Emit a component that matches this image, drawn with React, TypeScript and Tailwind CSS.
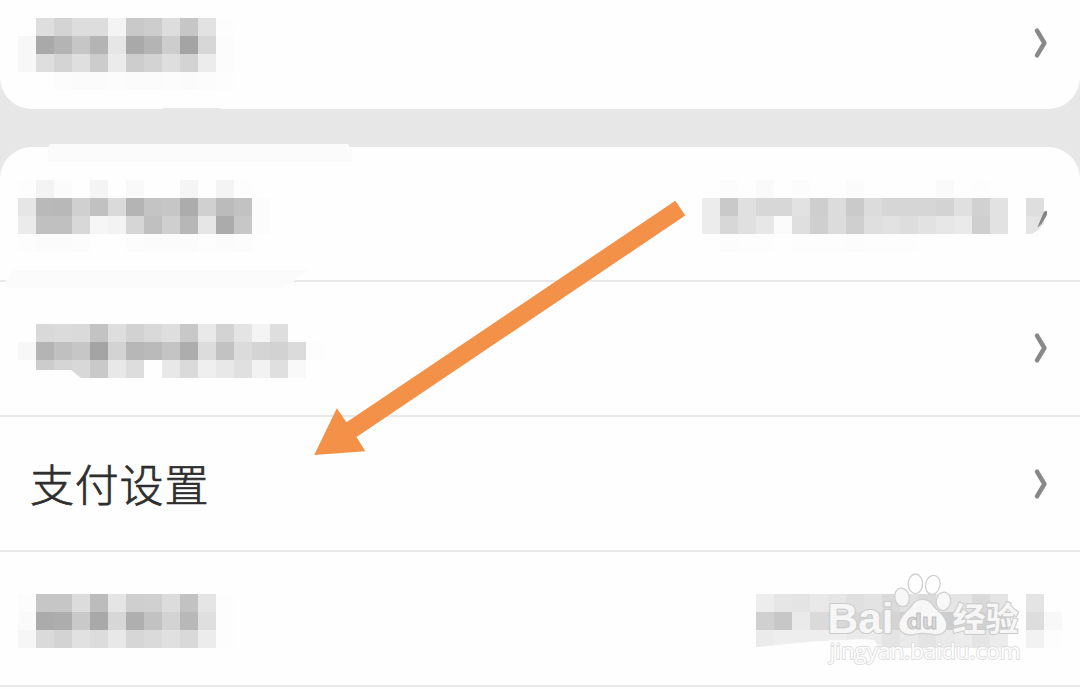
import React from "react";

const CELL = 18;

type MosaicProps = {
  rows: string[];
  clip?: string;
};

/* Each row is a list of two-digit grey levels, one per cell. */
function Mosaic({ rows, clip }: MosaicProps) {
  const grid = rows.map((r) => r.split(" "));
  const width = Math.max(...grid.map((r) => r.length)) * CELL;
  const height = grid.length * CELL;
  return (
    <svg width={width} height={height} viewBox={`0 0 ${width} ${height}`} aria-hidden="true">
      {grid.map((r, y) =>
        r.map((g, x) => (
          <rect
            key={`${x}-${y}`}
            x={x * CELL}
            y={y * CELL}
            width={CELL}
            height={CELL}
            fill={g === "ff" ? "none" : `#${g}${g}${g}`}
            shapeRendering="crispEdges"
          />
        ))
      )}
      {clip && <polygon points={clip} fill="#fefefe" />}
    </svg>
  );
}

function Chevron() {
  return (
    <svg width="16" height="34" viewBox="0 0 16 34" className="shrink-0" aria-hidden="true">
      <path
        d="M5 4.6 L12.4 17 L5 29.4"
        fill="none"
        stroke="#898989"
        strokeWidth="4.5"
        strokeLinecap="round"
        strokeLinejoin="round"
      />
    </svg>
  );
}

const nameA = [
  "ff de d4 dd dd f4 c9 cd dd c6 e2 fd",
  "f7 a9 b4 c6 b4 e6 a9 b4 cd a4 d7 fc",
  "f7 de d4 df cc eb cd d3 de d3 ec fc",
  "ff ff fc fb fb fc fb fb fc fb fc fd",
];
const nameB = [
  "fd f3 fb ff f4 ff f9 ff ff f5 ff f4 fd ff",
  "e6 b9 b8 d0 c1 da b4 c4 c6 ac d0 bb c2 fc",
  "eb c0 c0 d8 f6 f3 d6 c0 cf b7 e6 ab c7 fc",
  "fd fb fb fc ff ff fc fb fb fb fd fb fc ff",
];
const valueB = [
  "ff fc ff fa ff fc ff ff fb ff ff ff ff fa ff fd ff ff ff",
  "ec c9 e0 d7 d7 e2 ce dc ca dc d6 d6 d6 d3 e0 d1 e2 ff de",
  "ec d7 e0 e7 fb df cf dc cf df e2 dd e2 e7 ea cf e2 ff e4",
  "fe fc fd fd fe fd fd fd fc fd fd fd fe ff ff ff ff ff ff",
];
const nameC = [
  "ff d9 db da c3 de d2 d9 de c8 e9 d3 e4 f4 de ff",
  "f7 b4 c0 c6 a4 d3 b7 ba c4 ad dc c2 db d4 d2 db fd",
  "ff cc d5 d8 c9 e8 dd ff e8 da ef e8 e0 f2 df f9",
];
const nameD = [
  "fc c6 c6 dc bc e5 cf d0 dc c2 e5 fd",
  "fa ab ad c9 a9 d7 af c2 d3 b8 df fd",
  "f6 da d3 e1 dc e8 d6 da e0 d9 ec fd",
];
const valueD = [
  "ed e6 e4 e9 e6 e0 e3 da e1 da e6 e5 da e4 ff e4 ff",
  "d0 c7 ea da d8 d6 d8 d4 ce d6 cd d8 d2 d0 ff dd f8",
  "eb ee ee ee ee ea ec e4 ea e4 ea ec e5 ec ff f2 fd",
];

function Watermark() {
  return (
    <svg
      width="204"
      height="98"
      viewBox="824 570 204 98"
      className="absolute left-[824px] top-[570px]"
      aria-label="Baidu 经验"
    >
      <g fill="#f7f7f7" stroke="#d0d0d0" strokeWidth="1.3">
        <ellipse cx="915.4" cy="583.8" rx="7.2" ry="9.8" fill="#fefefe" />
        <ellipse cx="932.8" cy="584.8" rx="7.2" ry="9.6" fill="#fefefe" transform="rotate(12 932.8 584.8)" />
        <ellipse cx="902" cy="597.3" rx="7.2" ry="9.3" transform="rotate(-12 902 597.3)" />
        <ellipse cx="943.4" cy="601.3" rx="7.2" ry="9.3" transform="rotate(8 943.4 601.3)" />
        <path d="M922.5 599.4 C928.5 599.4 931.5 603 934.5 607 C938 611.5 946.6 616 946.8 625 C947 632 941 635.4 934.5 634.8 C930 634.2 927 633.4 922.5 633.4 C918 633.4 914.5 634.6 910 634.8 C903.5 635 898.6 631 898.8 624.5 C899 616.5 907 611.5 910.5 607 C914 602.5 916.5 599.4 922.5 599.4 Z" />
      </g>
      <g
        fill="#f6f6f6"
        stroke="#cccccc"
        strokeWidth="2.2"
        strokeLinejoin="round"
        className="[paint-order:stroke]"
      >
        <text x="827.5" y="632.5" fontSize="42" textLength="66" lengthAdjust="spacingAndGlyphs" className="font-['Liberation_Sans',sans-serif] font-bold">
          Bai
        </text>
        <text x="952.5" y="630.8" fontSize="33" textLength="66" lengthAdjust="spacingAndGlyphs" className="font-['Noto_Sans_CJK_SC',sans-serif] font-bold">
          经验
        </text>
      </g>
      <text x="906.5" y="628.5" fontSize="22.5" textLength="31" lengthAdjust="spacingAndGlyphs" fill="#d8d8d8" stroke="#c0c0c0" strokeWidth="0.9" className="font-['Liberation_Sans',sans-serif] font-bold">
        du
      </text>
      <text x="829.5" y="658.8" fontSize="21.5" textLength="191" lengthAdjust="spacingAndGlyphs" fill="#fdfdfd" stroke="#dedede" strokeWidth="1.8" strokeLinejoin="round" className="font-['Open_Sans',sans-serif] [paint-order:stroke]">
        jingyan.baidu.com
      </text>
    </svg>
  );
}

export default function App() {
  return (
    <main className="relative flex h-[689px] w-[1080px] flex-col gap-[38px] overflow-hidden bg-[#e7e7e7]">
      <section className="h-[109px] shrink-0 rounded-b-[32px] bg-[#fefefe]">
        <div className="flex items-start justify-between pl-[18px] pr-8 pt-[18px]">
          <Mosaic rows={nameA} />
          <div className="pt-2">
            <Chevron />
          </div>
        </div>
      </section>

      <section className="h-[560px] shrink-0 rounded-t-[32px] bg-[#fefefe]">
        <div className="flex h-[135px] items-start justify-between border-b-2 border-[#e8e8e8] pl-[18px] pr-9 pt-[33px]">
          <Mosaic rows={nameB} />
          <Mosaic rows={valueB} clip="342,44 336,50 330,54 342,54" />
        </div>
        <div className="flex h-[135px] items-start justify-between border-b-2 border-[#e8e8e8] pl-[18px] pr-8 pt-[42px]">
          <Mosaic rows={nameC} clip="0,46 53,46 63,54 0,54" />
          <div className="pt-[7px]">
            <Chevron />
          </div>
        </div>
        <div className="flex h-[135px] items-center justify-between border-b-2 border-[#e8e8e8] pl-[30px] pr-8">
          <span className="pb-px font-['Noto_Sans_CJK_SC',sans-serif] text-[44px] leading-[60px] font-light tracking-[0.8px] text-[#2e2e2e] [-webkit-text-stroke:0.7px_#2e2e2e]">
            支付设置
          </span>
          <Chevron />
        </div>
        <div className="flex h-[135px] items-start justify-between border-b-2 border-[#e8e8e8] pl-[18px] pr-[18px] pt-[42px]">
          <Mosaic rows={nameD} />
          <Mosaic rows={valueD} clip="0,53 50,48 106,45 118,46 124,54 0,54" />
        </div>
      </section>

      <svg
        width="1080"
        height="689"
        viewBox="0 0 1080 689"
        className="pointer-events-none absolute inset-0"
        aria-hidden="true"
      >
        <path d="M161 109 L163 108 H219 L222 109 Z" fill="#e7e7e7" />
        <path d="M48 162 V148 L50 144 H348 L352 150 V162 Z" fill="#fbfbfb" />
        <path d="M4 283 L14 270 H308 L303 274 L296 280 L284 288 H6 Z" fill="#fbfbfb" />
        <path d="M1037.3 227.8 L1043.4 213 Q1045.4 209.8 1046.8 211.4 Q1047.8 213 1045.8 217 L1041.5 224 Z" fill="#858585" />
        <polygon
          points="675.3,200.8 685.3,215.5 356.5,437 365.3,451.3 314.2,455 336.8,408.3 346.5,422.3"
          fill="#f39149"
        />
      </svg>
      <Watermark />
    </main>
  );
}
